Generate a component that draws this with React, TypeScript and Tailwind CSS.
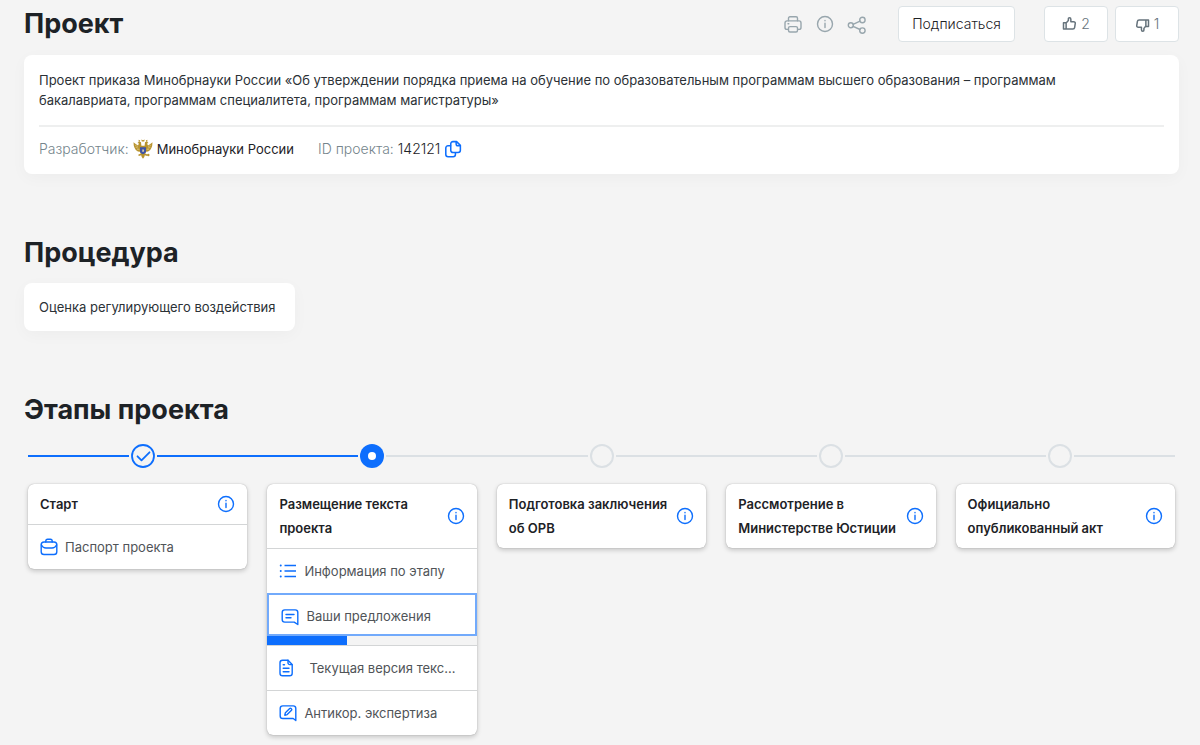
import React, { useState } from "react";

type IconProps = { className?: string; children?: React.ReactNode };

function Icon({ className = "size-5", children }: IconProps) {
  return (
    <svg
      viewBox="0 0 20 20"
      fill="none"
      stroke="currentColor"
      strokeWidth="1.4"
      strokeLinecap="round"
      strokeLinejoin="round"
      aria-hidden="true"
      className={`${className} shrink-0`}
    >
      {children}
    </svg>
  );
}

const PrinterIcon = () => (
  <Icon>
    <path d="M5.5 6.8V4.200c0-.8.6-1.400 1.400-1.400h6.200c.8 0 1.400.6 1.400 1.400v2.600" />
    <path d="M5.300 15.400H4a2 2 0 0 1-2-2V8.900a2 2 0 0 1 2-2h12a2 2 0 0 1 2 2v4.500a2 2 0 0 1-2 2h-1.300" />
    <rect x="5.500" y="12.600" width="9" height="5.400" rx="1.500" />
    <path d="M5 9.800h.8" />
  </Icon>
);

const InfoIcon = () => (
  <Icon>
    <circle cx="10" cy="10" r="7.500" />
    <path d="M10 9.200v4.300M10 6.400v.3" />
  </Icon>
);

const ShareIcon = () => (
  <Icon>
    <circle cx="3.800" cy="11.300" r="2.500" />
    <circle cx="15.400" cy="6" r="2.700" />
    <circle cx="15.400" cy="16.600" r="2.700" />
    <path d="m6.100 10.300 6.900-3.200M6.100 12.400l6.900 3.100" />
  </Icon>
);

const ThumbUpIcon = () => (
  <Icon className="size-[15px]">
    <path d="M2 7.500h3.500V16H2zM5.500 8l3-3.200V2.600c0-1 .6-1.600 1.500-1.600 1.100 0 1.800.8 1.800 2v3.200h3.700c1.500 0 2.400 1 2.200 2.300l-.9 5.600c-.2 1.200-1 1.900-2.200 1.900H5.500" strokeWidth="2" />
  </Icon>
);

const ThumbDownIcon = () => (
  <Icon className="size-[15px]">
    <path d="M18 12.500h-3.500V4H18zM14.500 12l-2.600 3.200v2.200c0 1-.6 1.600-1.500 1.600-1.100 0-1.800-.8-1.800-2v-3.200H4.500c-1.500 0-2.400-1-2.200-2.300l.9-5.600C3.400 4.700 4.200 4 5.400 4h9.100" strokeWidth="2" />
  </Icon>
);

const CopyIcon = () => (
  <Icon className="size-[18px]">
    <path d="M7.500 4.300c0-1.500 1-2.500 2.500-2.500h4l4.200 4.200v5.500c0 1.500-1 2.500-2.500 2.500H10c-1.500 0-2.500-1-2.500-2.500z" strokeWidth="1.700" />
    <path d="M13.500 2v2.500c0 1.200.8 2 2 2H18M7.300 6.500H4.500C3 6.500 2 7.500 2 9v7.200c0 1.500 1 2.500 2.500 2.500h5.700c1.500 0 2.500-1 2.500-2.500v-2" strokeWidth="1.700" />
  </Icon>
);

const BriefcaseIcon = () => (
  <Icon>
    <path d="M6.800 5V4c0-1.100.7-1.800 1.800-1.800h2.800c1.100 0 1.800.7 1.800 1.800v1" />
    <rect x="2.200" y="5" width="15.600" height="12.500" rx="2.800" />
    <path d="M2.400 8c1 2 2.700 3 4.600 3h6c1.900 0 3.600-1 4.600-3" />
  </Icon>
);

const ListIcon = () => (
  <Icon>
    <path d="M6.500 4.500H18M6.500 10H18M6.500 15.500H18" strokeWidth="1.500" strokeLinecap="butt" />
    <path d="M2.700 4.500h.1M2.700 10h.1M2.700 15.500h.1" strokeWidth="1.900" />
  </Icon>
);

const MessageIcon = () => (
  <Icon>
    <path d="M17.800 17.500V5.500c0-1.600-1-2.600-2.600-2.600H4.800c-1.600 0-2.600 1-2.600 2.600v7c0 1.600 1 2.600 2.600 2.600h9.400z" />
    <path d="M6 7.500h8M6 10.800h5" />
  </Icon>
);

const DocumentIcon = () => (
  <Icon>
    <path d="M11 2.200H5.600C4 2.200 3 3.200 3 4.800v10.400c0 1.600 1 2.600 2.600 2.600h7c1.600 0 2.600-1 2.600-2.600V6.500z" />
    <path d="M11 2.300v2.400c0 1.200.8 1.900 1.900 1.900H15M6.200 10.200H12M6.200 13.800H12M6.200 6.800h1.300" />
  </Icon>
);

const EditIcon = () => (
  <Icon>
    <path d="M17.800 17.500V5.500c0-1.600-1-2.600-2.600-2.600H4.800c-1.600 0-2.600 1-2.600 2.600v7.400c0 1.600 1 2.600 2.600 2.600h10.400z" />
    <path d="m6.800 12.200.6-2.500 4.300-4.200c.4-.4 1-.4 1.400 0l.4.400c.4.400.4 1 0 1.400l-4.300 4.300z" />
  </Icon>
);

const Emblem = () => (
  <svg viewBox="0 0 20 20" className="size-5 shrink-0" aria-hidden="true">
    <g fill="#b8932e">
      <path d="M.5 3.300 2.700 5 5 6.500l1-2L4.500 4l1.800-1.700L8 3.300l.4 3.400h3.200l.4-3.400 1.700-1L15.500 4l-1.500.5 1 2L17.300 5l2.200-1.700-.3 3.500-.7 2-1.300 2.300-2.100 1.400-2 .2-.9 1.800 2.600 1.300-.6 1.100-2.400-.7-.5 1.800L10 19.800 8.700 18l-.5-1.800-2.400.7-.6-1.100 2.600-1.300-.9-1.800-2-.2-2.100-1.400-1.300-2.300-.7-2z" />
      <path d="m8.300.5 1.700.8 1.700-.8-.5 2.100H8.800zM5.700.8l1.500.6-.5 1.200H5.500zM14.300.8l-1.500.6.5 1.200h1.200z" />
      <circle cx="15.300" cy="16" r="1.200" />
    </g>
    <path d="m2 6 3 2M2.500 8.200l3 1.200M4 10.600l2.500-.2M18 6l-3 2M17.500 8.200l-3 1.200M16 10.600l-2.500-.2" stroke="#f3e6bd" strokeWidth=".4" />
    <path d="M7 8.300h6v4.300c0 1.400-1.500 2-3 2.700-1.500-.7-3-1.300-3-2.700z" fill="#3f54a5" />
    <path d="m9 12.500.7-2.500 1.500 1-.6 2z" fill="#d8cda8" />
  </svg>
);

type StageItem = {
  label: string;
  icon: () => React.ReactElement;
  progress?: number;
  wide?: boolean;
};

type Stage = {
  title: string;
  state: "done" | "current" | "future";
  items: StageItem[];
};

const stages: Stage[] = [
  {
    title: "Старт",
    state: "done",
    items: [{ label: "Паспорт проекта", icon: BriefcaseIcon }],
  },
  {
    title: "Размещение текста проекта",
    state: "current",
    items: [
      { label: "Информация по этапу", icon: ListIcon },
      { label: "Ваши предложения", icon: MessageIcon, progress: 38 },
      { label: "Текущая версия текста", icon: DocumentIcon, wide: true },
      { label: "Антикор. экспертиза", icon: EditIcon },
    ],
  },
  { title: "Подготовка заключения об ОРВ", state: "future", items: [] },
  { title: "Рассмотрение в Министерстве Юстиции", state: "future", items: [] },
  { title: "Официально опубликованный акт", state: "future", items: [] },
];

function Marker({ state }: { state: Stage["state"] }) {
  if (state === "done") {
    return (
      <svg viewBox="0 0 24 24" className="size-6 shrink-0" fill="none" stroke="#0d6efd" role="img" aria-label="Завершён">
        <circle cx="12" cy="12" r="11" strokeWidth="1.800" />
        <path d="m6.500 12.300 4 4 8-8" strokeWidth="1.800" strokeLinecap="round" strokeLinejoin="round" />
      </svg>
    );
  }
  if (state === "current") {
    return (
      <span className="flex size-6 shrink-0 items-center justify-center rounded-full bg-[#0d6efd]">
        <span className="size-2 rounded-full bg-white" />
      </span>
    );
  }
  return <span className="size-6 shrink-0 rounded-full border-2 border-[#dbe0e4]" />;
}

function StageRow({ item }: { item: StageItem }) {
  const ItemIcon = item.icon;
  if (item.progress !== undefined) {
    return (
      <li>
        <button
          type="button"
          className="flex h-[43px] w-full items-center gap-1.5 border-2 border-[#72aafb] px-[11px] pt-1 text-left text-[#505458]"
        >
          <span className="text-[#0d6efd]"><ItemIcon /></span>
          <span className="truncate">{item.label}</span>
        </button>
        <div className="h-[9px] bg-[#f4f4f4]">
          <div className="h-full bg-[#0d6efd]" style={{ width: `${item.progress}%` }} />
        </div>
      </li>
    );
  }
  return (
    <li className="border-t border-[#d3d5d6]">
      <button
        type="button"
        className={`flex h-11 w-full items-center text-left text-[#505458] ${item.wide ? "gap-3 pr-5 pl-[10px]" : "gap-1.5 pr-3 pl-[11px]"}`}
      >
        <span className="text-[#0d6efd]"><ItemIcon /></span>
        <span className="truncate">{item.label}</span>
      </button>
    </li>
  );
}

function StageCard({ stage }: { stage: Stage }) {
  return (
    <section className="rounded-md bg-white text-[13px] font-normal shadow-[0_0_1px_rgba(0,0,0,0.35),0_2px_5px_rgba(0,0,0,0.2)]">
      <header className="flex items-center justify-between py-2 pr-[11px] pl-3">
        <h3 className="leading-6 font-semibold text-[#1d2226]">{stage.title}</h3>
        <button type="button" aria-label={`О стадии: ${stage.title}`} className="text-[#0d6efd]">
          <InfoIcon />
        </button>
      </header>
      {stage.items.length > 0 && (
        <ul>
          {stage.items.map((item) => (
            <StageRow key={item.label} item={item} />
          ))}
        </ul>
      )}
    </section>
  );
}

export default function App() {
  const [vote, setVote] = useState<"up" | "down" | null>(null);
  const blue = "bg-[#0d6efd]";
  const gray = "bg-[#dbe0e4]";
  const lineButton = "flex h-9 items-center justify-center rounded border border-[#dde3e6] bg-white";

  return (
    <main className="min-h-screen bg-[#f4f4f4] pt-[5px] pr-[21px] pb-2.5 pl-6 font-['Inter',sans-serif] text-sm font-light text-[#1d2226]">
      <div className="flex h-[38px] items-center justify-between">
        <h1 className="text-[27px] leading-9 font-bold">Проект</h1>
        <div className="flex items-center">
          <div className="mr-[31px] flex items-center gap-3 text-[#98a6ad]">
            <button type="button" aria-label="Печать"><PrinterIcon /></button>
            <button type="button" aria-label="Информация"><InfoIcon /></button>
            <button type="button" aria-label="Поделиться"><ShareIcon /></button>
          </div>
          <button type="button" className={`${lineButton} mr-[29px] w-[117px]`}>Подписаться</button>
          <div className="flex gap-[7px] text-[#66737c]">
            <button type="button" aria-pressed={vote === "up"} onClick={() => setVote("up")} className={`${lineButton} w-16 gap-1`}>
              <ThumbUpIcon />2
            </button>
            <button type="button" aria-pressed={vote === "down"} onClick={() => setVote("down")} className={`${lineButton} w-16 gap-1`}>
              <ThumbDownIcon />1
            </button>
          </div>
        </div>
      </div>

      <section className="mt-3 rounded-lg bg-white p-[15px] shadow-[0_4px_16px_rgba(0,0,0,0.03)]">
        <p className="pr-20 text-[13px] leading-5 font-normal text-[#2b3136]">
          Проект приказа Минобрнауки России «Об утверждении порядка приема на обучение по образовательным программам высшего образования – программам бакалавриата, программам специалитета, программам магистратуры»
        </p>
        <hr className="mt-[15px] border-t-2 border-[#eeefef]" />
        <dl className="mt-3 flex h-5 items-center">
          <dt className="text-[#75858c]">Разработчик:</dt>
          <dd className="ml-1 flex items-center gap-1 text-[13px] font-normal"><Emblem />Минобрнауки России</dd>
          <dt className="ml-6 text-[#75858c]">ID проекта:</dt>
          <dd className="ml-1 flex items-center gap-1">
            142121
            <button type="button" aria-label="Скопировать" className="text-[#0d6efd]"><CopyIcon /></button>
          </dd>
        </dl>
      </section>

      <h2 className="mt-[61px] text-[27px] leading-9 font-bold">Процедура</h2>
      <section className="mt-3 w-fit rounded-lg bg-white py-3.5 pr-5 pl-[15px] shadow-[0_4px_16px_rgba(0,0,0,0.03)]">
        <p className="text-[13px] leading-5 font-normal text-[#2b3136]">Оценка регулирующего воздействия</p>
      </section>

      <h2 className="mt-[61px] text-[27px] leading-9 font-bold">Этапы проекта</h2>
      <ol className="mt-4 mr-1 ml-1 grid grid-cols-5">
        {stages.map((stage) => (
          <li key={stage.title} className="group">
            <div className="flex items-center gap-0.5">
              <span className={`h-0.5 flex-1 ${stage.state === "future" ? gray : blue}`} />
              <Marker state={stage.state} />
              <span className={`h-0.5 flex-1 ${stage.state === "done" ? blue : gray}`} />
            </div>
            <div className="mt-4 px-2.5 group-first:pl-0 group-last:pr-0">
              <StageCard stage={stage} />
            </div>
          </li>
        ))}
      </ol>
    </main>
  );
}
